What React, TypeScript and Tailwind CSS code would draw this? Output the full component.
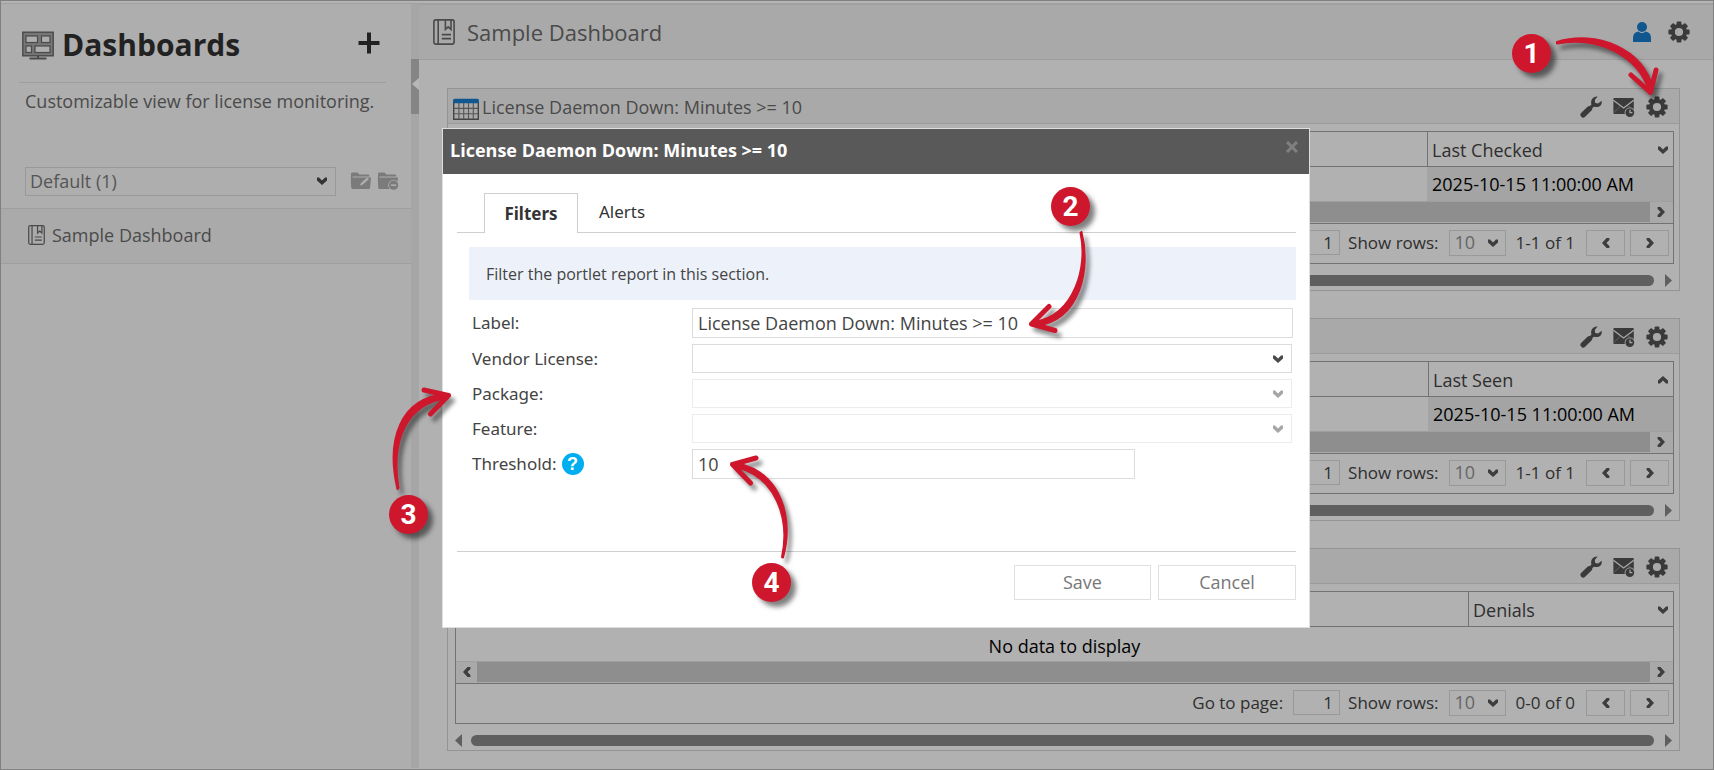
import React from 'react';

interface IconProps {
  className?: string;
}

function Chevron({ className = '' }: IconProps) {
  return (
    <svg aria-hidden width="10" height="8" viewBox="0 0 10 8" className={`shrink-0 ${className}`}>
      <path d="M0 0.6 L2 0.6 L5 3.6 L8 0.6 L10 0.6 L10 3.4 L5 8 L0 3.4 Z" fill="currentColor" />
    </svg>
  );
}

function GearIcon() {
  return (
    <svg width="22" height="22" viewBox="-11 -11 22 22" aria-hidden>
      <g fill="currentColor">
        {[0, 45, 90, 135, 180, 225, 270, 315].map((angle) => (
          <rect key={angle} x="-2.4" y="-10.6" width="4.8" height="5" rx="1" transform={`rotate(${angle})`} />
        ))}
      </g>
      <circle r="6.1" fill="none" stroke="currentColor" strokeWidth="4" />
    </svg>
  );
}

function WrenchIcon() {
  return (
    <svg width="22" height="22" viewBox="0 0 22 22" aria-hidden>
      <path d="M3.2 18.8 L9.4 12.8" fill="none" stroke="currentColor" strokeWidth="5.4" strokeLinecap="round" />
      <path d="M9 13.4 L14 8.2" fill="none" stroke="currentColor" strokeWidth="3.2" />
      <path
        d="M17.6 0.6 L14.8 4 L15.2 7 L18.2 7.4 L21.6 4.8 Q22.4 9.6 18.6 10.8 Q15.6 11.6 13.4 10.2 L11.6 8.6 Q10.4 6 12 3 Q14 0 17.6 0.6 Z"
        fill="currentColor"
      />
    </svg>
  );
}

function MailClockIcon() {
  return (
    <svg width="22" height="22" viewBox="0 0 22 22" aria-hidden>
      <rect x="0.4" y="2" width="20.4" height="16" rx="1" fill="currentColor" />
      <path d="M0.4 4.2 L10.6 12 L20.8 4.2" fill="none" stroke="#a9a9a9" strokeWidth="1.3" />
      <path d="M0.4 17 L7.2 10.4 M20.8 13 L14.2 10" fill="none" stroke="#6d6d6d" strokeWidth="0.8" />
      <circle cx="16.8" cy="16.6" r="5.2" fill="#a9a9a9" />
      <circle cx="16.8" cy="16.6" r="4.4" fill="currentColor" />
      <path d="M17 13.8 V16.6 H19.4" fill="none" stroke="#a9a9a9" strokeWidth="1.2" />
    </svg>
  );
}

function BookIcon({ className = '' }: IconProps) {
  return (
    <svg viewBox="0 0 22 26" fill="none" stroke="currentColor" strokeWidth="1.6" className={`shrink-0 ${className}`} aria-hidden>
      <rect x="0.9" y="0.9" width="20.2" height="24.2" rx="2" />
      <path d="M5.2 1 V25" />
      <path d="M12.4 1 V10.4 L15.2 7.8 L18 10.4 V1" />
      <path d="M8.8 15.6 H18 M8.8 19.6 H18" />
    </svg>
  );
}

function MonitorIcon() {
  return (
    <svg width="32" height="29" viewBox="0 0 32 29" fill="none" className="shrink-0 text-[#4a4a4a]" aria-hidden>
      <rect x="0.8" y="1.2" width="30.4" height="23.6" fill="#767676" stroke="currentColor" strokeWidth="1.4" />
      <g fill="#aeaeae" stroke="currentColor" strokeWidth="1.2">
        <rect x="4" y="5" width="11.5" height="6.5" />
        <rect x="19.5" y="5" width="8.5" height="6.5" />
        <rect x="4" y="15" width="5.5" height="6.5" />
        <rect x="13" y="15" width="15" height="6.5" />
      </g>
      <path d="M16 25 V27 M7.5 27.5 H24.5" stroke="currentColor" strokeWidth="2" />
    </svg>
  );
}

function TableIcon() {
  return (
    <svg width="26" height="22" viewBox="0 0 26 22" fill="none" className="mt-1 shrink-0" aria-hidden>
      <path d="M0.7 5 V21.3 H25.3 V5" stroke="#444" strokeWidth="1.4" />
      <path d="M5.9 5 V21 M10.7 5 V21 M15.5 5 V21 M20.3 5 V21 M1 10.4 H25 M1 15.8 H25" stroke="#555" strokeWidth="1.1" />
      <path d="M0 5.2 V2.4 Q0 0.8 1.6 0.8 H24.4 Q26 0.8 26 2.4 V5.2 Z" fill="#10578f" />
    </svg>
  );
}

function FolderIcon({ kind }: { kind: 'edit' | 'remove' }) {
  return (
    <svg width="22" height="20" viewBox="0 0 22 20" aria-hidden>
      <path d="M1 17 V3 Q1 1.6 2.4 1.6 H7.6 L9.4 3.4 H18 Q19.4 3.4 19.4 5 V5.6 H2.6 Z" fill="currentColor" />
      <path d="M0.8 6.6 H21 L20 17 Q19.8 18 18.8 18 H2.6 Q1.4 18 1.3 17 Z" fill="currentColor" />
      {kind === 'edit' ? (
        <path d="M10 14.6 L11 12 L17 6.4 L18.8 8.2 L12.6 13.8 Z" fill="#aeaeae" />
      ) : (
        <>
          <circle cx="16.6" cy="14.2" r="5.4" fill="#aeaeae" />
          <circle cx="16.6" cy="14.2" r="4.6" fill="currentColor" />
          <path d="M14 14.2 H19.2" stroke="#aeaeae" strokeWidth="1.6" />
        </>
      )}
    </svg>
  );
}

function Sidebar() {
  return (
    <aside className="w-[410px] shrink-0 bg-[#aeaeae]">
      <div className="mr-[25px] ml-[18px] flex h-[79px] items-center border-b border-[#9d9d9d] pt-1 pr-1.5 pl-[3px]">
        <MonitorIcon />
        <h1 className="ml-2 flex-1 text-[30px] leading-10 font-bold text-[#222]">Dashboards</h1>
        <button type="button" aria-label="Add dashboard" className="mb-1 text-[#222]">
          <svg width="22" height="22" viewBox="0 0 22 22" stroke="currentColor" strokeWidth="4" aria-hidden>
            <path d="M11 0.5 V21.5 M0.5 11 H21.5" />
          </svg>
        </button>
      </div>
      <p className="h-[84px] pt-1 pl-6 text-lg text-[#4a4a4a]">Customizable view for license monitoring.</p>
      <div className="flex h-[41px] items-start pl-6 text-[#7b7b7b]">
        <div className="relative w-[311px]">
          <select aria-label="Dashboard group" className="block h-[29px] w-full appearance-none border border-[#999] bg-transparent px-1 pb-0.5 text-lg leading-6 text-[#555]">
            <option>Default (1)</option>
          </select>
          <Chevron className="pointer-events-none absolute top-[10px] right-[9px] text-[#333]" />
        </div>
        <button type="button" aria-label="Edit group" className="mt-1 ml-[14px]">
          <FolderIcon kind="edit" />
        </button>
        <button type="button" aria-label="Remove group" className="mt-1 ml-[5px]">
          <FolderIcon kind="remove" />
        </button>
      </div>
      <a href="#sample" className="flex h-14 items-center border-y border-[#9f9f9f] bg-[#aaa] pb-0.5 pl-[27px] text-lg text-[#4a4a4a]">
        <BookIcon className="mr-[7px] h-5 w-[17px]" />
        Sample Dashboard
      </a>
    </aside>
  );
}

function GridScrollbar() {
  return (
    <div className="flex h-[22px] items-start border-t border-[#9f9f9f] bg-[#a9a9a9] text-[#3d3d3d]">
      <span className="flex h-5 w-[21px] items-center justify-center">
        <Chevron className="rotate-90" />
      </span>
      <span className="h-5 flex-1 bg-[#8e8e8e]" />
      <span className="flex h-5 w-[23px] items-center justify-center pr-0.5">
        <Chevron className="-rotate-90" />
      </span>
    </div>
  );
}

interface PagerProps {
  id: string;
  range: string;
}

function Pager({ id, range }: PagerProps) {
  return (
    <div className="flex h-10 items-center justify-end border-t border-[#727272] pr-1 pb-0.5 text-[17px] text-[#2e2e2e]">
      <label htmlFor={`${id}-page`}>Go to page:</label>
      <input id={`${id}-page`} defaultValue="1" className="mr-2 ml-[10px] h-[25px] w-[47px] border border-[#999] bg-transparent pr-1.5 text-right" />
      <label htmlFor={`${id}-rows`}>Show rows:</label>
      <div className="relative mx-[10px]">
        <select id={`${id}-rows`} className="block h-[26px] w-[57px] appearance-none border border-[#999] bg-transparent px-[5px] pb-0.5 text-lg leading-5 text-[#666]">
          <option>10</option>
        </select>
        <Chevron className="pointer-events-none absolute top-[9px] right-2 text-[#3d3d3d]" />
      </div>
      <span>{range}</span>
      <button type="button" aria-label="Previous page" className="ml-[11px] flex h-[26px] w-[39px] items-center justify-center border border-[#999] text-[#3d3d3d]">
        <Chevron className="rotate-90" />
      </button>
      <button type="button" aria-label="Next page" className="ml-[5px] flex h-[26px] w-[39px] items-center justify-center border border-[#999] text-[#3d3d3d]">
        <Chevron className="-rotate-90" />
      </button>
    </div>
  );
}

interface PortletProps {
  id: string;
  title?: string;
  column: string;
  columnWidth: string;
  value?: string;
  ascending?: boolean;
  range: string;
}

function Portlet({ id, title, column, columnWidth, value, ascending, range }: PortletProps) {
  return (
    <section className="border border-[#949494]">
      <header className="flex h-[35px] items-center border-b border-[#9b9b9b] bg-[#a9a9a9] pt-0.5 pr-[11px] pl-[5px]">
        {title && <TableIcon />}
        <h3 className="ml-[3px] flex-1 text-lg text-[#4a4a4a]">{title}</h3>
        <div className="flex gap-[11px] text-[#3a3a3a]">
          <button type="button" aria-label="Tools">
            <WrenchIcon />
          </button>
          <button type="button" aria-label="Email schedule">
            <MailClockIcon />
          </button>
          <button type="button" aria-label="Settings">
            <GearIcon />
          </button>
        </div>
      </header>
      <div className="mt-[7px] mr-[5px] ml-[7px] border border-[#727272]">
        <table className="w-full table-fixed border-separate border-spacing-0 text-lg">
          <thead>
            <tr className="h-[35px]">
              <td className="border-b border-[#727272] p-0" />
              <th className={`border-b border-l border-[#727272] py-0 pr-[5px] pl-1 text-left font-normal text-[#2e2e2e] ${columnWidth}`}>
                <span className="flex items-center justify-between pt-0.5">
                  {column}
                  <Chevron className={ascending ? 'rotate-180 text-[#3d3d3d]' : 'text-[#3d3d3d]'} />
                </span>
              </th>
            </tr>
          </thead>
          <tbody>
            <tr className="h-[34px] text-black">
              {value ? (
                <>
                  <td className="p-0" />
                  <td className="bg-[#a4a4a4] py-0 pl-[5px]">{value}</td>
                </>
              ) : (
                <td colSpan={2} className="pt-1 pb-0 text-center">
                  No data to display
                </td>
              )}
            </tr>
          </tbody>
        </table>
        <GridScrollbar />
        <Pager id={id} range={range} />
      </div>
      <div className="mt-[11px] mb-1 flex h-[11px] items-center justify-between px-[7px] text-[#5f5f5f]">
        <svg width="7" height="13" viewBox="0 0 7 13" aria-hidden>
          <path d="M7 0 V13 L0 6.5 Z" fill="currentColor" />
        </svg>
        <span className="mr-[11px] ml-[9px] h-[11px] flex-1 rounded-full bg-[#5f5f5f]" />
        <svg width="7" height="13" viewBox="0 0 7 13" aria-hidden>
          <path d="M0 0 V13 L7 6.5 Z" fill="currentColor" />
        </svg>
      </div>
    </section>
  );
}

function SelectField({ id, label, disabled }: { id: string; label: string; disabled?: boolean }) {
  return (
    <div className="flex items-center">
      <label htmlFor={id} className="w-[220px]">
        {label}
      </label>
      <div className="relative mr-px flex-1">
        <select
          id={id}
          disabled={disabled}
          className="block h-[29px] w-full appearance-none border border-[#dcdcdc] bg-white disabled:border-[#ececec] disabled:opacity-100"
        />
        <Chevron className={`pointer-events-none absolute top-[11px] right-[9px] ${disabled ? 'text-[#a6a6a6]' : 'text-[#4a4a4a]'}`} />
      </div>
    </div>
  );
}

function FilterDialog() {
  return (
    <div role="dialog" aria-label="License Daemon Down: Minutes >= 10" className="absolute top-[127px] left-[441px] w-[868px] border border-[#dedede] bg-white">
      <header className="flex h-[45px] items-start justify-between bg-[#595959] pt-[7px] pr-[11px] pl-[7px]">
        <h2 className="text-lg font-bold text-white">License Daemon Down: Minutes &gt;= 10</h2>
        <button type="button" aria-label="Close" className="mt-[5px] text-[#808080]">
          <svg width="12" height="12" viewBox="0 0 12 12" stroke="currentColor" strokeWidth="3" aria-hidden>
            <path d="M1 1 L11 11 M11 1 L1 11" />
          </svg>
        </button>
      </header>
      <div className="pt-[19px] pr-[13px] pb-[27px] pl-[14px] font-['Noto_Sans','Open_Sans',sans-serif] text-[17px] text-[#444]">
        <div role="tablist" className="flex h-10 items-end border-b border-[#cfcfcf] pl-[27px] text-[#333]">
          <button type="button" role="tab" aria-selected="true" className="-mb-px h-10 w-[94px] border border-b-0 border-[#cfcfcf] bg-white font-bold">
            Filters
          </button>
          <button type="button" role="tab" aria-selected="false" className="h-10 w-[88px]">
            Alerts
          </button>
        </div>
        <p className="mt-[14px] ml-3 flex h-[53px] items-center bg-[#edf2fa] pl-[17px] font-['Open_Sans',sans-serif] text-base">
          Filter the portlet report in this section.
        </p>
        <form id="filters" className="mt-2 mr-[3px] ml-[15px] flex flex-col gap-1.5">
          <div className="flex items-center">
            <label htmlFor="label" className="w-[220px]">
              Label:
            </label>
            <input id="label" defaultValue="License Daemon Down: Minutes >= 10" className="h-[30px] flex-1 border border-[#dcdcdc] px-[5px] font-['Open_Sans',sans-serif] text-lg" />
          </div>
          <SelectField id="vendor" label="Vendor License:" />
          <SelectField id="package" label="Package:" disabled />
          <SelectField id="feature" label="Feature:" disabled />
          <div className="flex items-center">
            <div className="flex w-[220px] items-center gap-[5px]">
              <label htmlFor="threshold">Threshold:</label>
              <button type="button" aria-label="Help" className="flex size-[22px] items-center justify-center rounded-full bg-[#00aeef] font-['Liberation_Sans',sans-serif] text-lg font-bold text-white">
                ?
              </button>
            </div>
            <input id="threshold" defaultValue="10" className="h-[30px] w-[443px] border border-[#dcdcdc] px-[5px] font-['Open_Sans',sans-serif] text-lg" />
          </div>
        </form>
        <footer className="mt-[72px] flex justify-end gap-[7px] border-t border-[#cfcfcf] pt-[13px] font-['Open_Sans',sans-serif] text-lg text-[#777]">
          <button type="submit" form="filters" className="h-[35px] w-[137px] border border-[#e0e0e0] pb-0.5">
            Save
          </button>
          <button type="button" className="h-[35px] w-[138px] border border-[#e0e0e0] pb-0.5">
            Cancel
          </button>
        </footer>
      </div>
    </div>
  );
}

interface CalloutProps {
  step: number;
  badge: string;
  arrow: string;
  viewBox: string;
  shaft: string;
  head: string;
}

function Callout({ step, badge, arrow, viewBox, shaft, head }: CalloutProps) {
  return (
    <>
      <svg viewBox={viewBox} className={`pointer-events-none absolute overflow-visible drop-shadow-[4px_5px_2px_rgba(0,0,0,0.45)] ${arrow}`} aria-hidden>
        <path d={shaft} fill="#ce172d" stroke="#ce172d" strokeWidth="2" strokeLinejoin="round" />
        <path d={head} fill="none" stroke="#ce172d" strokeWidth="5" strokeLinecap="round" strokeLinejoin="round" />
      </svg>
      <span className={`absolute flex size-[39px] items-center justify-center rounded-full bg-[#ce172d] font-['Roboto',sans-serif] text-[28px] font-bold text-white shadow-[5px_5px_5px_rgba(0,0,0,0.5)] ${badge}`}>
        {step}
      </span>
    </>
  );
}

const callouts: CalloutProps[] = [
  {
    step: 1,
    badge: 'top-[33px] right-[162px]',
    arrow: 'top-[29px] right-[48px] h-[75px] w-[115px]',
    viewBox: '1550 30 115 75',
    shaft: 'M1557 42 C1596 30 1643 48 1653 89 L1649 91 C1637 53 1595 36 1557 43.5 Z',
    head: 'M1631 75 L1650.5 92.5 L1656 70',
  },
  {
    step: 2,
    badge: 'top-[186px] left-[1050px]',
    arrow: 'top-[224px] left-[1024px] h-[110px] w-[70px]',
    viewBox: '1025 225 70 110',
    shaft: 'M1081.5 232 C1091 268 1081 320 1036 326 L1035 322 C1075 315 1088 266 1080.5 233 Z',
    head: 'M1049 306.5 L1031.5 324 L1055 330.5',
  },
  {
    step: 3,
    badge: 'top-[494px] left-[388px]',
    arrow: 'top-[384px] left-[384px] h-[110px] w-[70px]',
    viewBox: '385 385 70 110',
    shaft: 'M397.5 489 C386 440 400 398 446 394 L447 398 C405 404 391 442 398.5 488 Z',
    head: 'M424 390 L448.5 395.5 L430.5 414',
  },
  {
    step: 4,
    badge: 'top-[562px] left-[751px]',
    arrow: 'top-[449px] left-[724px] h-[115px] w-[70px]',
    viewBox: '725 450 70 115',
    shaft: 'M782 557 C790 520 777 476 735 467 L736 463 C782 472 794 520 783 557.5 Z',
    head: 'M756 458 L732.5 464.5 L750.5 483',
  },
];

export default function App() {
  return (
    <div className="relative min-h-screen border border-[#808080] bg-[#b1b1b1] font-['Open_Sans',sans-serif]">
      <div className="h-[3px] border-b border-[#a0a0a0] bg-[#b4b4b4]" />
      <div className="flex">
        <Sidebar />
        <div className="w-2 shrink-0 bg-[#a6a6a6] pt-[55px]">
          <button type="button" aria-label="Collapse sidebar" className="flex h-[55px] w-2 items-center justify-center bg-[#858585] pb-1.5">
            <svg width="7" height="12" viewBox="0 0 7 12" aria-hidden>
              <path d="M7 0 V12 L0 6 Z" fill="#b8b8b8" />
            </svg>
          </button>
        </div>
        <main className="min-w-0 flex-1">
          <header className="flex h-14 items-center border-t border-b border-t-[#a0a0a0] border-b-[#9d9d9d] bg-[#a9a9a9] pr-[23px] pl-[14px]">
            <BookIcon className="h-[26px] w-[22px] text-[#4a4a4a]" />
            <h2 className="ml-3 flex-1 text-[22px] leading-8 text-[#4a4a4a]">Sample Dashboard</h2>
            <button type="button" aria-label="Account" className="mr-[17px] text-[#10578f]">
              <svg width="18" height="20" viewBox="0 0 18 20" fill="currentColor" aria-hidden>
                <circle cx="9" cy="5" r="5" />
                <path d="M0 20 V16 Q0 10 5.5 9.4 Q9 12.4 12.5 9.4 Q18 10 18 16 V20 Z" />
              </svg>
            </button>
            <button type="button" aria-label="Page settings" className="text-[#3a3a3a]">
              <GearIcon />
            </button>
          </header>
          <div className="flex flex-col gap-[27px] pt-7 pr-[33px] pb-[17px] pl-7">
            <Portlet id="daemon" title="License Daemon Down: Minutes >= 10" column="Last Checked" columnWidth="w-[246px]" value="2025-10-15 11:00:00 AM" range="1-1 of 1" />
            <Portlet id="seen" column="Last Seen" columnWidth="w-[245px]" value="2025-10-15 11:00:00 AM" ascending range="1-1 of 1" />
            <Portlet id="denials" column="Denials" columnWidth="w-[205px]" range="0-0 of 0" />
          </div>
        </main>
      </div>
      <FilterDialog />
      {callouts.map((callout) => (
        <Callout key={callout.step} {...callout} />
      ))}
    </div>
  );
}
